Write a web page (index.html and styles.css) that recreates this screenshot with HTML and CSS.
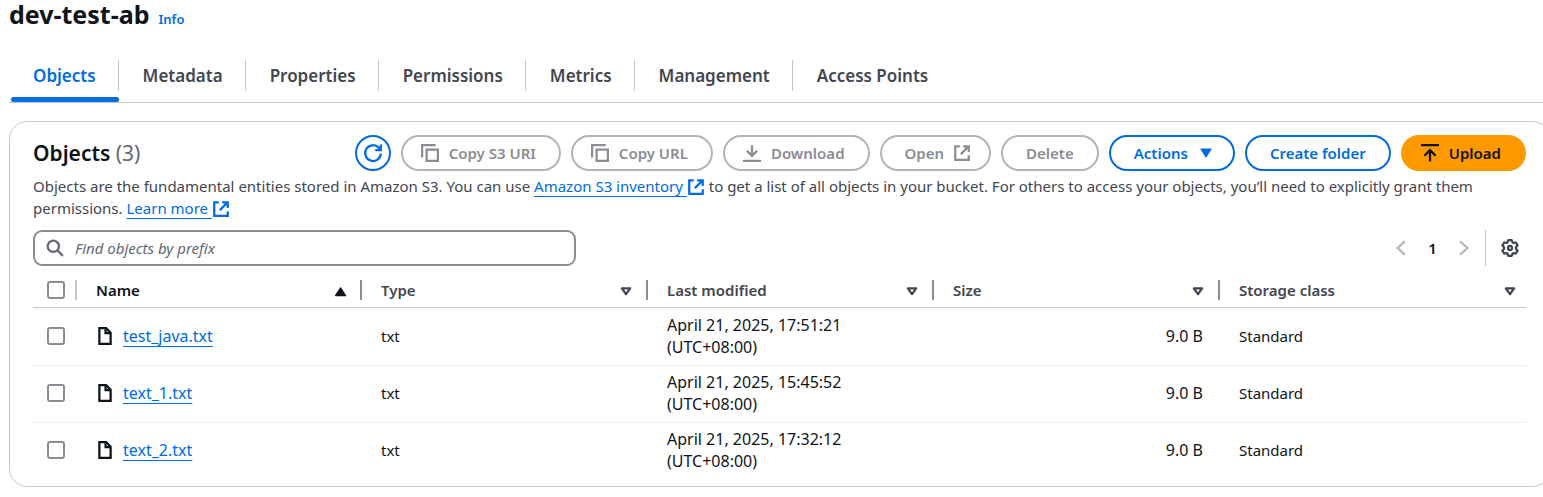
FILE: index.html
```html
<!DOCTYPE html>
<html lang="en">
<head>
<meta charset="utf-8">
<title>dev-test-ab</title>
<link rel="stylesheet" href="styles.css">
</head>
<body>
<svg class="sprite" aria-hidden="true">
  <symbol id="i-copy" viewBox="0 0 16 16"><path d="M1 12V1h12M5 5h10v10H5z"/></symbol>
  <symbol id="i-external" viewBox="0 0 16 16"><path d="M6 2H2v12h12v-4M9 2h5v5M14 2 7 9"/></symbol>
  <symbol id="i-caret" viewBox="0 0 16 16"><path class="solid" d="M3.500 4.500h9L8 11.500z"/></symbol>
  <symbol id="i-sort" viewBox="0 0 16 16"><path class="round-join" d="M4.300 6.500h7.400L8 11.700z"/></symbol>
  <symbol id="i-sorted" viewBox="0 0 16 16"><path class="solid" d="M4 13h9L8.500 6z"/></symbol>
  <symbol id="i-file" viewBox="0 0 16 16"><path d="M3 1h6l4 4v10H3zM8.500 1v4.500H13"/></symbol>
</svg>
<main class="page">
  <header class="title">
    <h1>dev-test-ab</h1>
    <a class="info" href="#info">Info</a>
  </header>
  <nav class="tabs">
    <a class="tab active" href="#objects"><span>Objects</span></a>
    <a class="tab" href="#metadata"><span>Metadata</span></a>
    <a class="tab" href="#properties"><span>Properties</span></a>
    <a class="tab" href="#permissions"><span>Permissions</span></a>
    <a class="tab" href="#metrics"><span>Metrics</span></a>
    <a class="tab" href="#management"><span>Management</span></a>
    <a class="tab" href="#access"><span>Access Points</span></a>
  </nav>
  <section class="panel">
    <div class="head">
      <h2>Objects <span class="count">(3)</span></h2>
      <div class="actions">
        <button class="btn round" aria-label="Refresh"><svg class="icon" viewBox="0 0 16 16"><path d="M15 8.500A7 7 0 1 1 13 3.200L14.500 5M15 .5v5h-5"/></svg></button>
        <button class="btn lead" disabled><svg class="icon"><use href="#i-copy"/></svg>Copy S3 URI</button>
        <button class="btn lead" disabled><svg class="icon"><use href="#i-copy"/></svg>Copy URL</button>
        <button class="btn lead" disabled><svg class="icon" viewBox="0 0 16 16"><path d="M8 1v9M3.500 6 8 10.500 12.500 6M0 15h16"/></svg>Download</button>
        <button class="btn trail" disabled>Open<svg class="icon"><use href="#i-external"/></svg></button>
        <button class="btn" disabled>Delete</button>
        <button class="btn trail">Actions<svg class="icon"><use href="#i-caret"/></svg></button>
        <button class="btn">Create folder</button>
        <button class="btn lead primary"><svg class="icon" viewBox="0 0 16 16"><path d="M8 15.500V6M3 10.500 8 5.500l5 5M0 1h16"/></svg>Upload</button>
      </div>
    </div>
    <p class="desc">Objects are the fundamental entities stored in Amazon S3. You can use <a class="link" href="#inventory">Amazon S3 inventory&nbsp;</a><svg class="icon ext"><use href="#i-external"/></svg> to get a list of all objects in your bucket. For others to access your objects, you’ll need to explicitly grant them permissions. <a class="link" href="#more">Learn more&nbsp;</a><svg class="icon ext"><use href="#i-external"/></svg></p>
    <div class="tools">
      <label class="search">
        <svg class="icon" viewBox="0 0 16 16"><circle cx="6.500" cy="6.500" r="5"/><path d="m10 10 5 5"/></svg>
        <input type="text" placeholder="Find objects by prefix" aria-label="Find objects by prefix">
      </label>
      <div class="pager">
        <button class="arrow" aria-label="Previous page" disabled><svg class="icon" viewBox="0 0 16 16"><path d="M11.500 2 5 8l6.500 6"/></svg></button>
        <button class="num">1</button>
        <button class="arrow" aria-label="Next page" disabled><svg class="icon" viewBox="0 0 16 16"><path d="M4.500 2 11 8l-6.500 6"/></svg></button>
        <button class="gear" aria-label="Preferences"><svg class="icon" viewBox="0 0 16 16"><path class="round-join" d="M6.500 1h3l.7 2 .9.500 2.100-.4 1.500 2.600L13.300 7.300v1.400l1.400 1.600-1.500 2.600-2.100-.4-.9.500-.7 2h-3l-.7-2-.9-.5-2.100.4-1.500-2.600 1.400-1.600V7.300L1.300 5.700l1.500-2.600 2.100.4.9-.5z"/><circle cx="8" cy="8" r="1.800"/></svg></button>
      </div>
    </div>
    <table>
      <colgroup><col class="c-check"><col class="c-name"><col class="c-data"><col class="c-data"><col class="c-data"><col></colgroup>
      <thead>
        <tr>
          <th class="check light"><div class="th"><input type="checkbox" aria-label="Select all"></div></th>
          <th class="sorted"><div class="th">Name<svg class="icon"><use href="#i-sorted"/></svg></div></th>
          <th><div class="th">Type<svg class="icon"><use href="#i-sort"/></svg></div></th>
          <th><div class="th">Last modified<svg class="icon"><use href="#i-sort"/></svg></div></th>
          <th><div class="th">Size<svg class="icon"><use href="#i-sort"/></svg></div></th>
          <th><div class="th">Storage class<svg class="icon"><use href="#i-sort"/></svg></div></th>
        </tr>
      </thead>
      <tbody>
        <tr>
          <td class="check"><input type="checkbox" aria-label="Select test_java.txt"></td>
          <td class="wide"><div class="file"><svg class="icon"><use href="#i-file"/></svg><a class="link" href="#f1">test_java.txt</a></div></td>
          <td>txt</td><td class="wide">April 21, 2025, 17:51:21<br>(UTC+08:00)</td><td class="wide size">9.0 B</td><td>Standard</td>
        </tr>
        <tr>
          <td class="check"><input type="checkbox" aria-label="Select text_1.txt"></td>
          <td class="wide"><div class="file"><svg class="icon"><use href="#i-file"/></svg><a class="link" href="#f2">text_1.txt</a></div></td>
          <td>txt</td><td class="wide">April 21, 2025, 15:45:52<br>(UTC+08:00)</td><td class="wide size">9.0 B</td><td>Standard</td>
        </tr>
        <tr>
          <td class="check"><input type="checkbox" aria-label="Select text_2.txt"></td>
          <td class="wide"><div class="file"><svg class="icon"><use href="#i-file"/></svg><a class="link" href="#f3">text_2.txt</a></div></td>
          <td>txt</td><td class="wide">April 21, 2025, 17:32:12<br>(UTC+08:00)</td><td class="wide size">9.0 B</td><td>Standard</td>
        </tr>
      </tbody>
    </table>
  </section>
</main>
</body>
</html>
```
FILE: styles.css
```css
* { box-sizing: border-box; }
body {
  margin: 0;
  overflow-x: hidden;
  background: #fff;
  color: #0f141a;
  font: 15px/22px "Noto Sans", sans-serif;
}
button, input { font: inherit; color: inherit; }
.sprite { display: none; }
.icon {
  width: 18px;
  height: 18px;
  flex: none;
  fill: none;
  stroke: currentColor;
  stroke-width: 2;
  overflow: visible;
}
.round-join { stroke-linejoin: round; }
.solid { fill: currentColor; stroke-width: 1; stroke-linejoin: round; }

.page { margin: 0 -7px 0 9px; }
.title { display: flex; align-items: baseline; gap: 9px; height: 30px; }
h1 { margin: 0; font-size: 25px; line-height: 29px; font-weight: 700; }
.info { color: #006ce0; font-size: 13px; font-weight: 600; text-decoration: none; }

.tabs { display: flex; margin-top: 19px; border-bottom: 1px solid #c6c6cd; }
.tab {
  padding: 11px 0 6px;
  color: #424650;
  font-size: 17px;
  font-weight: 600;
  text-decoration: none;
  border-bottom: 5px solid transparent;
}
.tab span { display: block; padding: 5px 22px 4px 24px; border-right: 1px solid #c6c6cd; }
.tab:last-child span { border-right: 0; }
.tab.active { position: relative; color: #006ce0; }
.tab.active::after {
  content: "";
  position: absolute;
  left: 2px;
  right: 0;
  bottom: -5px;
  height: 5px;
  border-radius: 3px;
  background: #006ce0;
}

.panel {
  margin-top: 18px;
  padding: 13px 23px 7px;
  border: 1px solid #c6c6cd;
  border-radius: 18px;
}
.head { display: flex; justify-content: space-between; align-items: center; }
h2 { margin: 0; font-size: 21px; line-height: 26px; font-weight: 600; }
.count { color: #656871; font-weight: 400; }
.actions { display: flex; gap: 10px; }
.btn {
  display: flex;
  align-items: center;
  gap: 9px;
  height: 36px;
  padding: 0 23px 1px;
  border: 2px solid #006ce0;
  border-radius: 18px;
  background: #fff;
  color: #006ce0;
  font-weight: 600;
  white-space: nowrap;
}
.btn.lead { gap: 10px; padding-left: 18px; }
.btn.trail { padding-right: 18px; }
.btn.round { width: 36px; padding: 0; justify-content: center; }
.btn:disabled { border-color: #b4b4bb; color: #8c8c94; }
.btn.primary { border-color: #ff9900; background: #ff9900; color: #0f141a; }

.desc { margin: 4px 0 11px; color: #424650; }
.link {
  color: #006ce0;
  text-decoration: underline 1px;
  text-underline-offset: 4px;
  text-decoration-skip-ink: none;
}
.ext { color: #006ce0; vertical-align: -4px; }

.tools { display: flex; justify-content: space-between; align-items: center; }
.search {
  display: flex;
  align-items: center;
  gap: 11px;
  width: 543px;
  height: 36px;
  padding: 0 11px;
  border: 2px solid #8c8c94;
  border-radius: 9px;
  color: #656871;
}
.search input { flex: 1; min-width: 0; padding: 0 0 1px; border: 0; outline: 0; background: none; }
.search input::placeholder { color: #656871; font-style: italic; opacity: 1; }
.pager { display: flex; align-items: center; }
.pager button { display: flex; justify-content: center; padding: 0; border: 0; background: none; }
.pager .arrow { width: 18px; color: #b4b4bb; }
.pager .num { width: 45px; font-weight: 600; }
.pager .gear {
  align-items: center;
  height: 36px;
  margin-left: 12px;
  padding: 0 7px 0 15px;
  border-left: 1px solid #c6c6cd;
  color: #424650;
}

table { width: 100%; margin-top: 9px; border-collapse: separate; border-spacing: 0; table-layout: fixed; }
.c-check { width: 44px; }
.c-name { width: 285px; }
.c-data { width: 286px; }
th { padding: 5px 0 7px; border-bottom: 1px solid #c6c6cd; color: #424650; font-weight: 600; text-align: left; }
.th {
  display: flex;
  justify-content: space-between;
  align-items: center;
  height: 20px;
  padding: 0 11px 0 19px;
  border-right: 2px solid #8c8c94;
}
th:last-child .th { border-right: 0; padding-right: 7px; }
.sorted { color: #0f141a; }
.light .th { border-color: #c6c6cd; padding: 0 0 0 14px; }
td { padding: 5px 17px 7px 19px; border-top: 1px solid #ebebf0; }
tbody tr:first-child td { border-top-color: transparent; }
td.check { padding: 5px 0 7px 14px; }
.wide { font-size: 16px; }
.size { text-align: right; }
.file { display: flex; align-items: center; gap: 9px; }
input[type="checkbox"] {
  display: block;
  width: 18px;
  height: 18px;
  margin: 0;
  appearance: none;
  border: 2px solid #8c8c94;
  border-radius: 3px;
  background: #fff;
}
```
